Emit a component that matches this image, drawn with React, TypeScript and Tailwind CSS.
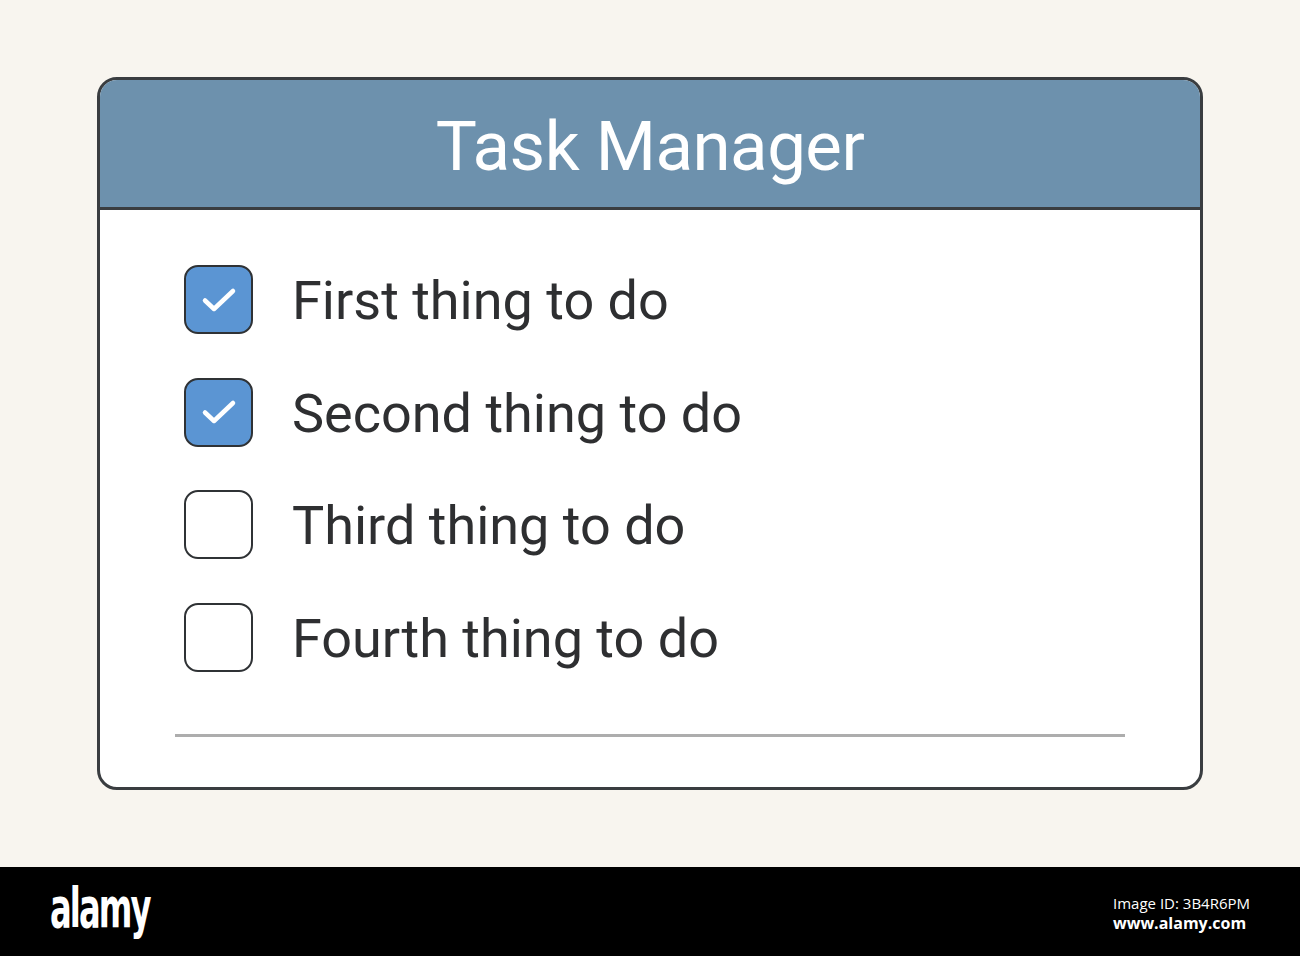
import React from 'react';

const tasks = [
  { label: 'First thing to do', done: true },
  { label: 'Second thing to do', done: true },
  { label: 'Third thing to do', done: false },
  { label: 'Fourth thing to do', done: false },
];

const Check = ({ done }: { done: boolean }) => (
  <div
    className={`w-[69px] h-[69px] shrink-0 rounded-[14px] border-[2.5px] border-[#2f3235] flex items-center justify-center ${
      done ? 'bg-[#5b95d3]' : 'bg-white'
    }`}
  >
    {done && (
      <svg width="36" height="28" viewBox="0 0 36 28" fill="none">
        <path d="M4 14.5 L13 23 L32 5" stroke="white" strokeWidth="4.5" strokeLinecap="round" strokeLinejoin="round" />
      </svg>
    )}
  </div>
);

export default function App() {
  return (
    <div className="w-[1300px] h-[956px] flex flex-col bg-[#f8f5ef]" style={{ fontFamily: 'Roboto, "Liberation Sans", sans-serif' }}>
      <div className="h-[867px] pt-[77px] pl-[97px]">
        <div className="w-[1106px] h-[713px] rounded-[20px] border-[3px] border-[#3a3d40] bg-white overflow-hidden flex flex-col">
          <div className="h-[130px] shrink-0 bg-[#6d91ad] border-b-[3px] border-[#3a3d40] flex items-center justify-center">
            <h1 className="text-white text-[69px] leading-none pt-[6px] tracking-[-0.5px]">Task Manager</h1>
          </div>
          <div className="pl-[84px] pt-[55px] flex flex-col gap-[43.5px]">
            {tasks.map((t) => (
              <div key={t.label} className="flex items-center gap-[39px]">
                <Check done={t.done} />
                <span className="text-[#2e2f31] text-[54px] leading-none pt-[3px]">{t.label}</span>
              </div>
            ))}
          </div>
          <div className="ml-[75px] mr-[75px] mt-[62px] h-[3px] bg-[#adadad]" />
        </div>
      </div>
      <div className="flex-1 bg-black flex items-center justify-between pl-[50px] pr-[50px]">
        <span
          className="text-white text-[56px] font-bold tracking-[-3px] leading-none pb-[8px] origin-left scale-x-[0.64] inline-block"
          style={{ fontFamily: '"DejaVu Sans Condensed", "Liberation Sans", sans-serif' }}
        >
          alamy
        </span>
        <div className="flex flex-col items-start pt-[2px]" style={{ fontFamily: '"Open Sans", sans-serif' }}>
          <span className="text-white text-[15px] leading-[20px]">Image ID: 3B4R6PM</span>
          <span className="text-white text-[16px] font-bold leading-[20px]">www.alamy.com</span>
        </div>
      </div>
    </div>
  );
}
